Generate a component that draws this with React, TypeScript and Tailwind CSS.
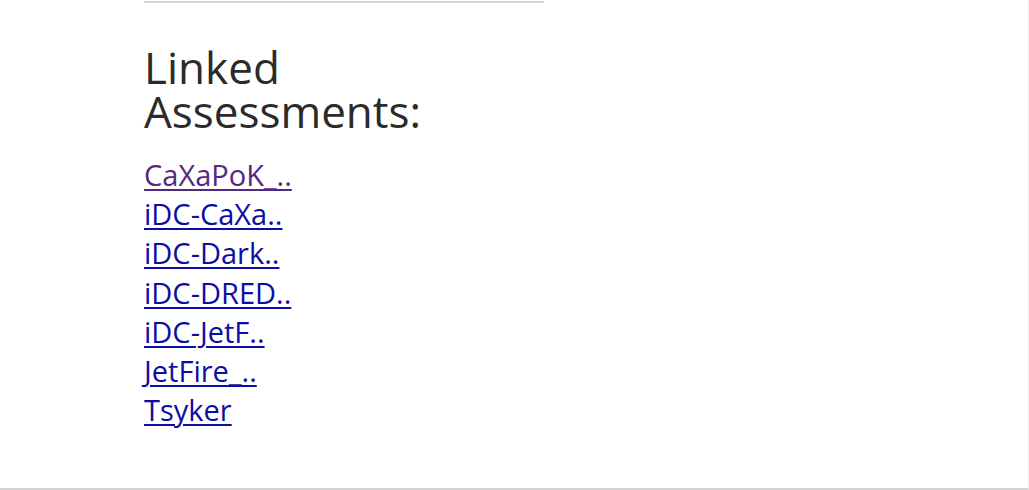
const links = [
  { label: 'CaXaPoK_..', visited: true },
  { label: 'iDC-CaXa..', visited: false },
  { label: 'iDC-Dark..', visited: false },
  { label: 'iDC-DRED..', visited: false },
  { label: 'iDC-JetF..', visited: false },
  { label: 'JetFire_..', visited: false },
  { label: 'Tsyker', visited: false },
];

export default function App() {
  return (
    <div
      className="h-[490px] w-[1029px] bg-white border-b-2 border-b-[#d4d4d4] border-r border-r-[#f0f0f0] overflow-hidden"
      style={{ fontFamily: '"Open Sans", "Noto Sans", sans-serif' }}
    >
      <div className="ml-[144px] w-[400px]">
        {/* divider from the section above */}
        <div className="mt-px h-[2px] bg-[#d6d6d6]" />

        <h2 className="mt-[42px] text-[44px] leading-[44px] font-normal text-[#2b2b2b]">
          Linked
          <br />
          Assessments:
        </h2>

        <ul className="mt-[22px]">
          {links.map((l) => (
            <li key={l.label} className="text-[29px] leading-[39.2px]">
              <a
                href="#"
                className={
                  l.visited
                    ? 'text-[#55287f] underline underline-offset-[3px] decoration-[1.5px]'
                    : 'text-[#0d0da6] underline underline-offset-[3px] decoration-[1.5px]'
                }
              >
                {l.label}
              </a>
            </li>
          ))}
        </ul>
      </div>
    </div>
  );
}
